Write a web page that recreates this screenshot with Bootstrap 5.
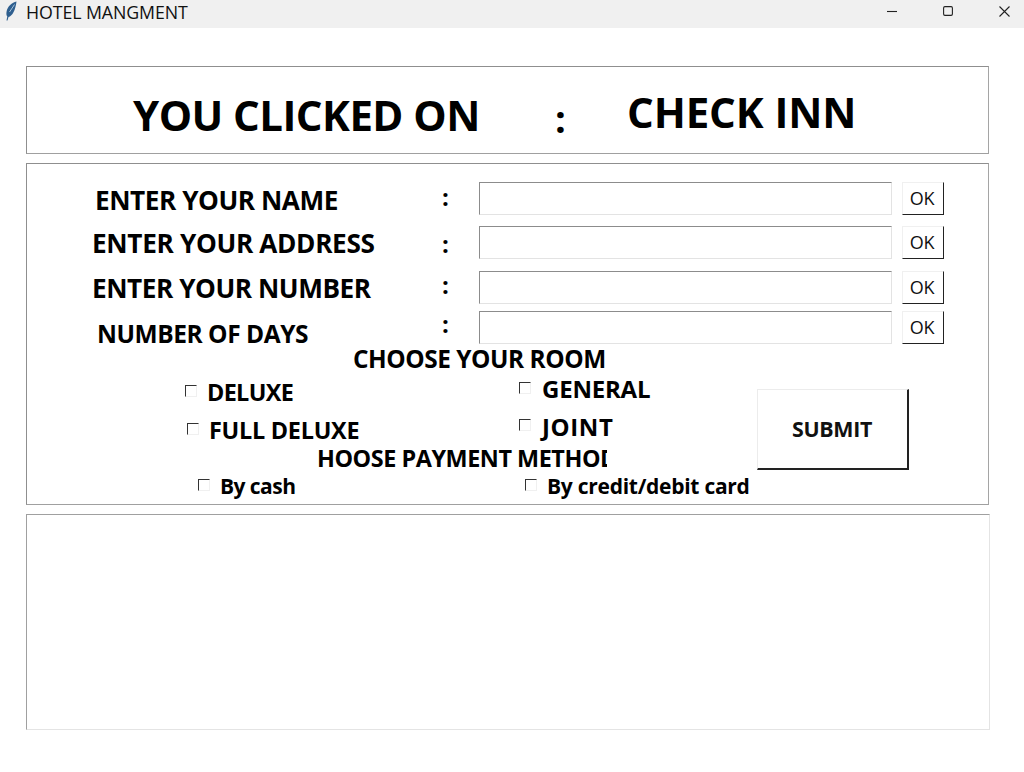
<!DOCTYPE html>
<html lang="en">
<head>
<meta charset="utf-8">
<title>HOTEL MANGMENT</title>
<link href="https://cdn.jsdelivr.net/npm/bootstrap@5.3.0/dist/css/bootstrap.min.css" rel="stylesheet">
<style>
html,body{height:772px;overflow:hidden;background:#fff;}
body{font-family:"Open Sans","Noto Sans",sans-serif;color:#000;}
.hm-titlebar{height:28px;background:#f0f0f0;color:#111;font-size:17.8px;font-family:"Open Sans",sans-serif;letter-spacing:-.1px;}
.hm-titletext{margin-top:-4px;}
.hm-feather{width:12px;height:20px;margin-left:5px;margin-right:9px;margin-top:-6px;}
.hm-winbtn{width:56px;height:28px;padding-bottom:6px;}
.hm-winset{margin-right:-8px;}
.hm-panel{border:1px solid #8f8f8f;border-right-color:#a5a5a5;border-bottom-color:#a0a0a0;margin-left:26px;width:963px;}
.hm-head{height:88px;margin-top:38px;margin-bottom:9px;font-weight:700;font-size:42px;letter-spacing:-.55px;}
.hm-head-a{margin-left:106px;width:422px;padding-top:23px;line-height:50px;}
.hm-head-b{width:72px;padding-top:26px;line-height:50px;font-size:38px;}
.hm-head-c{padding-top:20px;line-height:50px;letter-spacing:-.1px;}
.hm-form{height:342px;margin-bottom:9px;}
.hm-line{height:44px;font-weight:700;font-size:26.2px;letter-spacing:-.45px;}
.hm-line-mid{height:45px;}
.hm-line-short{height:40px;}
.hm-days{font-size:24.5px;}
.hm-lab{width:415px;line-height:36px;white-space:nowrap;}
.hm-lab-up{line-height:34px;}
.hm-addr{letter-spacing:-.33px;}
.hm-colon{width:37px;line-height:30px;font-size:24px;}
.hm-entry.form-control{width:413px;height:33px;border-radius:0;border:1px solid #e3e3e3;border-top-color:#8c8c8c;border-left-color:#8c8c8c;padding:0;box-shadow:none;}
.hm-ok.btn{width:42px;height:33px;margin-left:10px;padding:0 2px 0 0;border-radius:0;background:#fff;color:#111;font-size:18px;font-weight:400;letter-spacing:-.2px;border:1px solid #f0f0f0;border-right-color:#222;border-bottom-color:#222;line-height:31px;}
.hm-sec{font-weight:700;font-size:24.4px;letter-spacing:-.45px;line-height:32px;white-space:nowrap;}
.hm-opt{font-weight:700;font-size:24px;letter-spacing:-.45px;white-space:nowrap;line-height:32px;}
.hm-dlx{font-size:23.4px;letter-spacing:-.65px;}
.hm-full{font-size:23.4px;letter-spacing:-.25px;}
.hm-gentxt{letter-spacing:-.2px;margin-left:1px;}
.hm-jnttxt{letter-spacing:.6px;margin-left:1px;}
.hm-pay{font-size:21px;margin-top:-4px;}
.hm-cash{letter-spacing:-.55px;}
.hm-card{letter-spacing:-.27px;}
.hm-clip{width:290px;overflow:hidden;margin-left:290px;margin-top:-5px;font-size:23.4px;}
.hm-check.form-check-input{width:12px;height:12px;margin:0 10px 3px 0;border-radius:0;flex:none;background:#fff;border:1px solid #f0f0f0;border-top-color:#333;border-left-color:#333;box-shadow:none;}
.hm-left{width:730px;}
.hm-submit.btn{width:152px;height:81px;border-radius:0;padding:1px 1px 0 0;background:#fff;color:#111;font-weight:700;font-size:21.4px;letter-spacing:-.3px;border:1px solid #ececec;border-right:2px solid #222;border-bottom:2px solid #222;margin-top:38px;}
.hm-output{width:964px;height:216px;border:1px solid #e4e4e4;border-top-color:#a0a0a0;border-left-color:#a0a0a0;}
.hm-m69{margin-left:68px}.hm-m66{margin-left:65px}.hm-m71{margin-left:70px}
.hm-r1{margin-top:18px}
.hm-choose{margin-left:326px;margin-top:-8px;}
.hm-row-a{margin-top:-4px;height:42px;}
.hm-row-b{height:34px;}
.hm-col1{width:492px;}
.hm-i158{margin-left:158px}.hm-i160{margin-left:160px}.hm-i171{margin-left:171px}
.hm-gen{margin-top:-6px}
.hm-jnt{margin-top:-7px}
.hm-c-row3{margin-top:-1px}
.hm-c-row4{margin-top:-2px}
.hm-c-row2{margin-top:3px}
.hm-lab-days{margin-top:5px}
.hm-paycol1{width:498px;}
</style>
</head>
<body>
<div class="hm-titlebar d-flex align-items-center">
  <svg class="hm-feather" viewBox="0 0 12 20" aria-hidden="true"><path d="M11.500 .5C7 1.500 2.500 5 1.500 11c-.3 2 0 3.500.8 4.500L1.500 19.500h1l1-3.500c4-1 7-7 8-15.500z" fill="#2f5f8f"/><path d="M9.500 3.500L4.500 11" stroke="#a9c3da" stroke-width="1"/></svg>
  <span class="flex-grow-1 hm-titletext">HOTEL MANGMENT</span>
  <div class="d-flex align-items-center hm-winset">
    <div class="hm-winbtn d-flex align-items-center justify-content-center"><svg width="10" height="10" viewBox="0 0 10 10"><path d="M0 5.500h10" stroke="#222" stroke-width="1.100"/></svg></div>
    <div class="hm-winbtn d-flex align-items-center justify-content-center"><svg width="10" height="10" viewBox="0 0 10 10"><rect x=".6" y=".6" width="8.800" height="8.800" rx="1.300" fill="none" stroke="#222" stroke-width="1.100"/></svg></div>
    <div class="hm-winbtn d-flex align-items-center justify-content-center"><svg width="11" height="11" viewBox="0 0 11 11"><path d="M.5.5l10 10M10.500.5l-10 10" stroke="#222" stroke-width="1.100"/></svg></div>
  </div>
</div>

<div class="hm-panel hm-head d-flex">
  <div class="hm-head-a">YOU CLICKED ON</div>
  <div class="hm-head-b">:</div>
  <div class="hm-head-c">CHECK INN</div>
</div>

<div class="hm-panel hm-form">
  <div class="hm-line d-flex hm-r1">
    <div class="hm-lab"><span class="hm-m69">ENTER YOUR NAME</span></div>
    <div class="hm-colon">:</div>
    <input class="form-control hm-entry" type="text" aria-label="Name">
    <button class="btn hm-ok" type="button">OK</button>
  </div>
  <div class="hm-line hm-line-mid d-flex">
    <div class="hm-lab hm-lab-up hm-addr"><span class="hm-m66">ENTER YOUR ADDRESS</span></div>
    <div class="hm-colon hm-c-row2">:</div>
    <input class="form-control hm-entry" type="text" aria-label="Address">
    <button class="btn hm-ok" type="button">OK</button>
  </div>
  <div class="hm-line hm-line-short d-flex">
    <div class="hm-lab hm-lab-up"><span class="hm-m66">ENTER YOUR NUMBER</span></div>
    <div class="hm-colon hm-c-row3">:</div>
    <input class="form-control hm-entry" type="text" aria-label="Number">
    <button class="btn hm-ok" type="button">OK</button>
  </div>
  <div class="hm-line hm-line-short d-flex">
    <div class="hm-lab hm-lab-days hm-days"><span class="hm-m71">NUMBER OF DAYS</span></div>
    <div class="hm-colon hm-c-row4">:</div>
    <input class="form-control hm-entry" type="text" aria-label="Days">
    <button class="btn hm-ok" type="button">OK</button>
  </div>
  <div class="d-flex">
    <div class="hm-left">
      <div class="hm-sec hm-choose">CHOOSE YOUR ROOM</div>
      <div class="d-flex hm-row-a">
        <div class="hm-col1 d-flex align-items-center hm-opt"><div class="d-flex align-items-center hm-i158"><input class="form-check-input hm-check" type="checkbox" aria-label="Deluxe"><span class="hm-dlx">DELUXE</span></div></div>
        <div class="d-flex align-items-center hm-opt hm-gen"><input class="form-check-input hm-check" type="checkbox" aria-label="General"><span class="hm-gentxt">GENERAL</span></div>
      </div>
      <div class="d-flex hm-row-b">
        <div class="hm-col1 d-flex align-items-center hm-opt"><div class="d-flex align-items-center hm-i160"><input class="form-check-input hm-check" type="checkbox" aria-label="Full deluxe"><span class="hm-full">FULL DELUXE</span></div></div>
        <div class="d-flex align-items-center hm-opt hm-jnt"><input class="form-check-input hm-check" type="checkbox" aria-label="Joint"><span class="hm-jnttxt">JOINT</span></div>
      </div>
      <div class="hm-sec hm-clip">HOOSE PAYMENT METHOD</div>
      <div class="d-flex hm-opt hm-pay">
        <div class="hm-paycol1 d-flex align-items-center"><div class="d-flex align-items-center hm-i171"><input class="form-check-input hm-check" type="checkbox" aria-label="By cash"><span class="hm-cash">By cash</span></div></div>
        <div class="d-flex align-items-center"><input class="form-check-input hm-check" type="checkbox" aria-label="By card"><span class="hm-card">By credit/debit card</span></div>
      </div>
    </div>
    <button class="btn hm-submit" type="button">SUBMIT</button>
  </div>
</div>

<div class="hm-panel hm-output"></div>

<script src="https://cdn.jsdelivr.net/npm/bootstrap@5.3.0/dist/js/bootstrap.bundle.min.js"></script>
</body>
</html>
